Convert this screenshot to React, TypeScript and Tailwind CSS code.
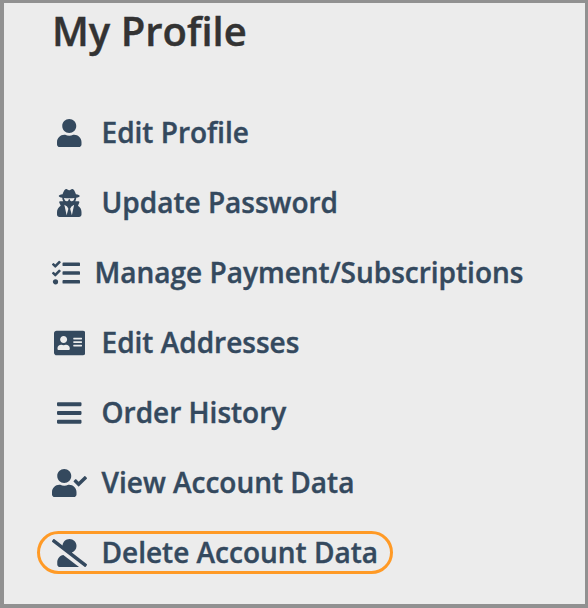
import type { IconType } from "react-icons";
import {
  FaAddressCard,
  FaBars,
  FaTasks,
  FaUser,
  FaUserCheck,
  FaUserSecret,
  FaUserSlash,
} from "react-icons/fa";

interface MenuItem {
  label: string;
  icon: IconType;
  iconSize: string;
  narrow?: boolean;
  highlighted?: boolean;
}

const menuItems: MenuItem[] = [
  { label: "Edit Profile", icon: FaUser, iconSize: "w-[24.5px]" },
  { label: "Update Password", icon: FaUserSecret, iconSize: "w-[24.5px]" },
  { label: "Manage Payment/Subscriptions", icon: FaTasks, iconSize: "w-[28px]", narrow: true },
  { label: "Edit Addresses", icon: FaAddressCard, iconSize: "w-[31.5px]" },
  { label: "Order History", icon: FaBars, iconSize: "w-[24.5px]" },
  { label: "View Account Data", icon: FaUserCheck, iconSize: "w-[35px]" },
  { label: "Delete Account Data", icon: FaUserSlash, iconSize: "w-[35px]", highlighted: true },
];

function MenuLink({ label, icon: Icon, iconSize, narrow, highlighted }: MenuItem) {
  return (
    <a
      className={`flex h-[43px] w-fit items-center rounded-full border-3 pl-[12px] pr-[12px] ${
        highlighted ? "border-[#ff9a26]" : "border-transparent"
      }`}
    >
      <span className={`flex shrink-0 justify-center ${narrow ? "w-[28px]" : "w-[35px]"}`}>
        <Icon className={`h-[28px] shrink-0 ${iconSize}`} />
      </span>
      <span className="ml-[14.5px] whitespace-nowrap pb-[2px] leading-[38px]">{label}</span>
    </a>
  );
}

export default function App() {
  return (
    <div className="h-[608px] w-[588px] overflow-hidden border-4 border-r-3 border-t-3 border-[#919191] bg-[#ececec] font-['Open_Sans',sans-serif] font-semibold [-webkit-text-stroke:0.4px]">
      <h1 className="ml-[48px] mt-[1px] h-[54px] text-[40px] leading-[54px] text-[#333333]">
        My Profile
      </h1>

      {/* Account links */}
      <nav className="ml-[33px] mt-[53px] flex flex-col gap-[27px] text-[28px] text-[#34495e]">
        {menuItems.map((item) => (
          <MenuLink key={item.label} {...item} />
        ))}
      </nav>
    </div>
  );
}
